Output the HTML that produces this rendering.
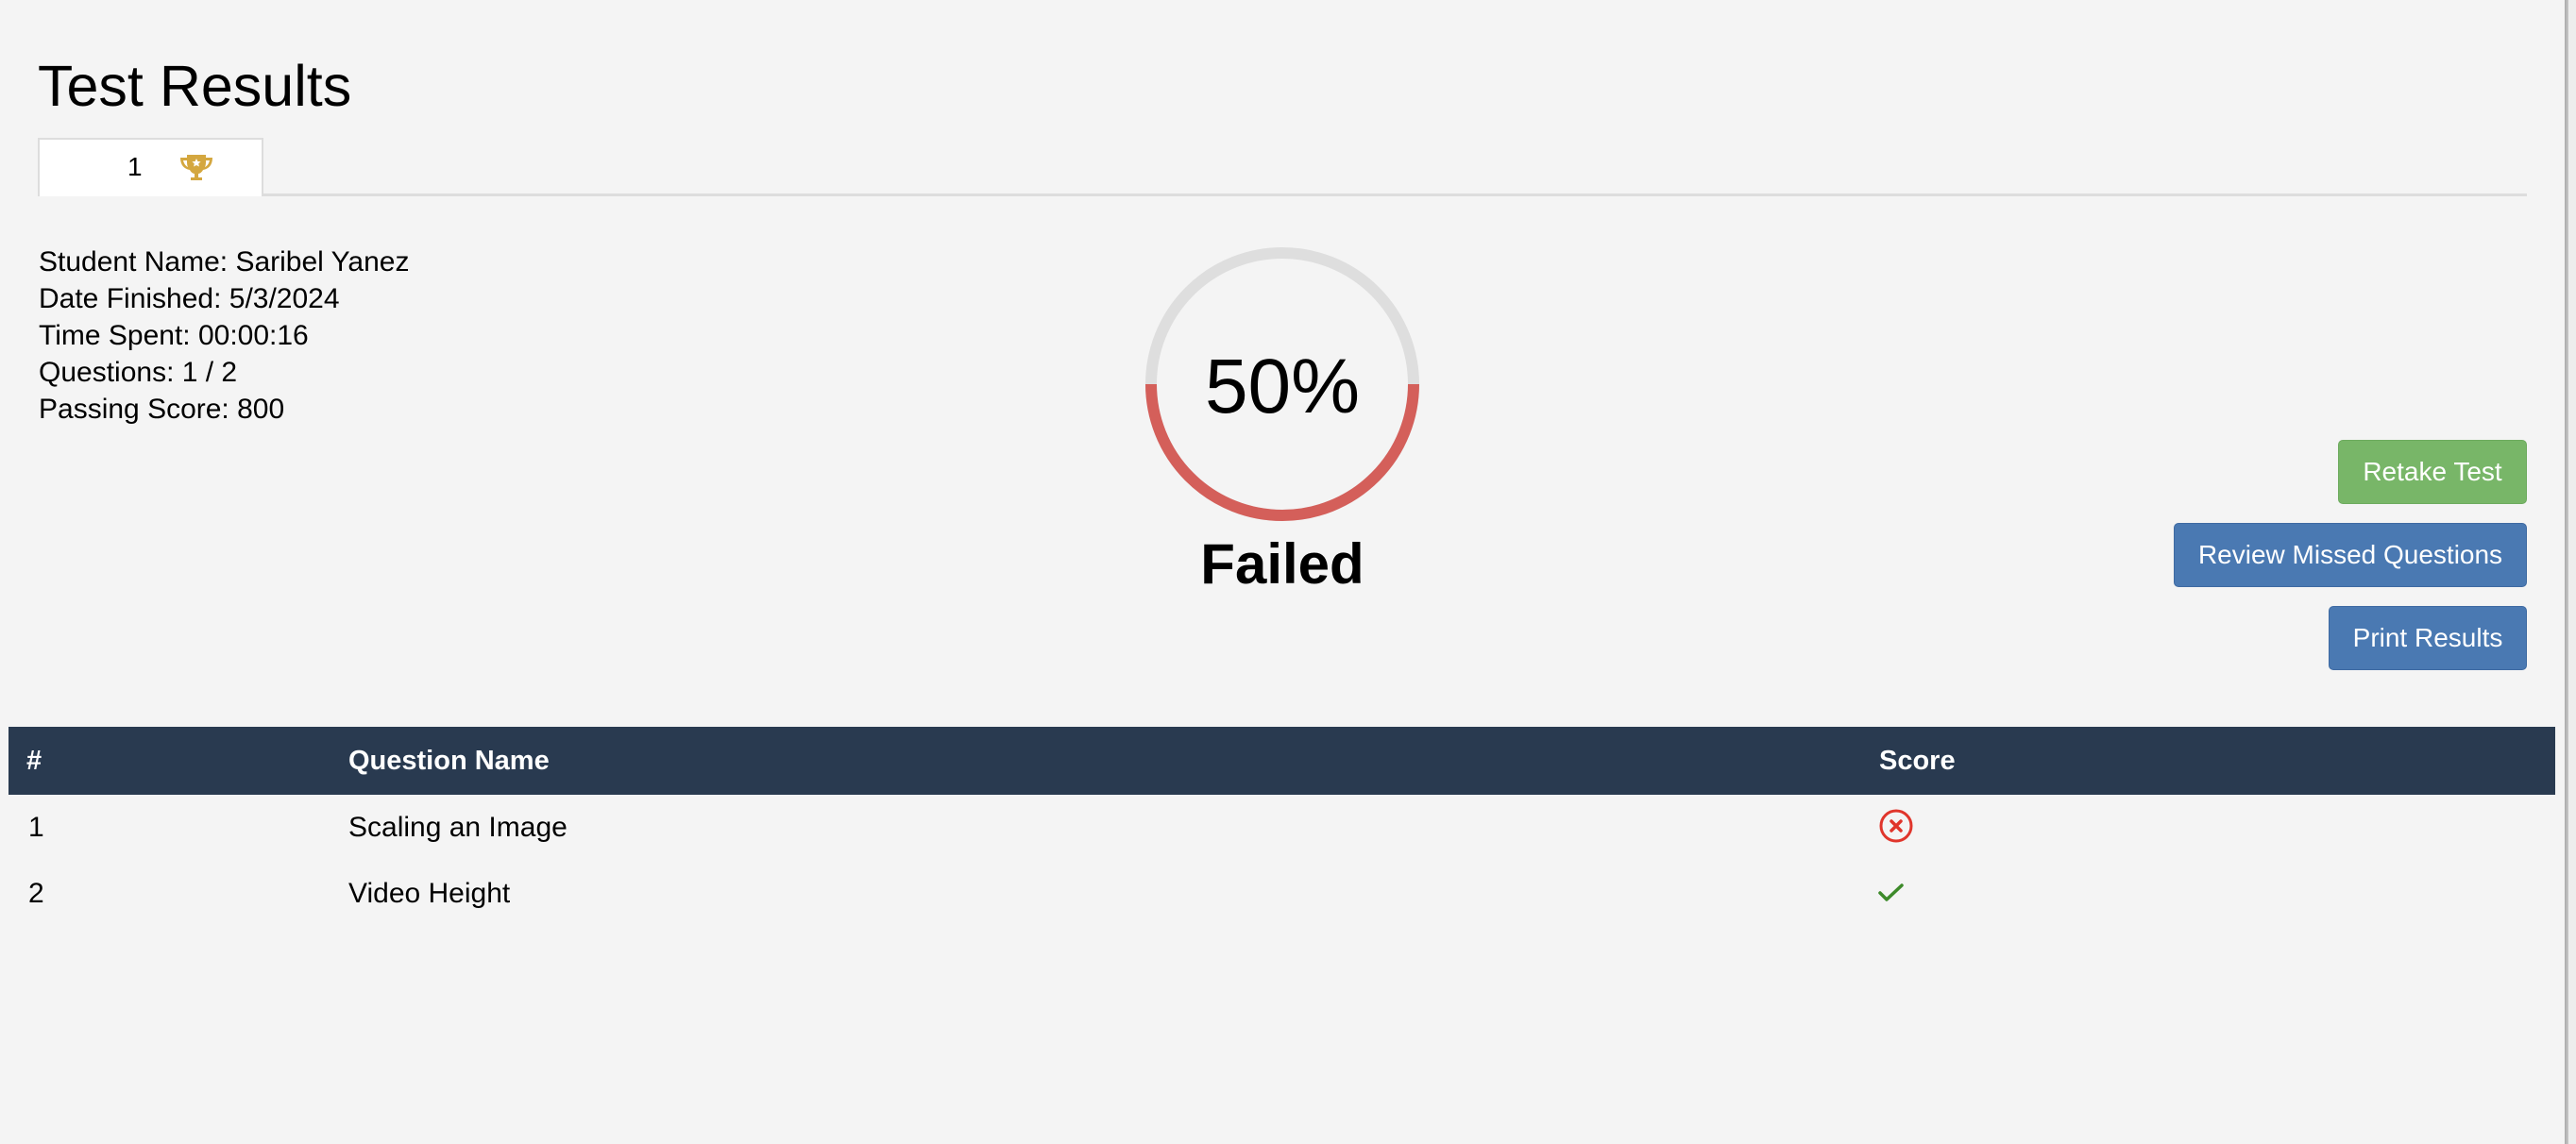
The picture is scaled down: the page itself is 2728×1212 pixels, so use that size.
<!DOCTYPE html>
<html><head><meta charset="utf-8"><style>
*{margin:0;padding:0;box-sizing:border-box}
html,body{width:2728px;height:1212px;overflow:hidden;background:#f4f4f4;font-family:"Liberation Sans",Arial,sans-serif;color:#000}
.abs{position:absolute;white-space:nowrap}
.btn{position:absolute;color:#fff;font-size:28px;border-radius:5px;text-align:center;line-height:66px;height:68px}
.blue{background:#4a79b2;border:1px solid #3e6aa2}
.green{background:#78b668;border:1px solid #6dab5e}
.info{font-size:30px;line-height:39px}
</style></head><body>
<div class="abs" style="left:40px;top:56px;font-size:61px;line-height:70px">Test Results</div>
<div class="abs" style="left:278px;top:205px;width:2398px;height:3px;background:#ddd"></div>
<div class="abs" style="left:40px;top:146px;width:239px;height:62px;background:#fff;border:2px solid #ddd;border-bottom:none"></div>
<div class="abs" style="left:135px;top:160px;font-size:28px;line-height:34px">1</div>
<svg class="abs" style="left:190px;top:162px" width="36" height="32" viewBox="0 0 36 32">
<path d="M8 2h20v3h7c0 8-4 12-10 13-1 2-3 4-5 4v4h4v3H12v-3h4v-4c-2 0-4-2-5-4C5 17 1 13 1 5h7zM4 8c1 4 3 6 5 7-1-2-1-4-1-7zM32 8h-4c0 3 0 5-1 7 2-1 4-3 5-7z" fill="#d4a73f"/>
<path d="M18 6l1.4 3 3.2.3-2.4 2.1.7 3.1L18 13l-2.9 1.5.7-3.1-2.4-2.1 3.2-.3z" fill="#fff"/></svg>
<div class="abs info" style="left:41px;top:258px">Student Name: Saribel Yanez<br>Date Finished: 5/3/2024<br>Time Spent: 00:00:16<br>Questions: 1 / 2<br>Passing Score: 800</div>
<svg class="abs" style="left:1210px;top:260px" width="300" height="300" viewBox="0 0 300 300">
<circle cx="148" cy="147" r="139" fill="none" stroke="#dedede" stroke-width="12"/>
<path d="M9 147A139 139 0 0 0 287 147" fill="none" stroke="#d45f5a" stroke-width="12"/>
</svg>
<div class="abs" style="left:1158px;top:360px;width:400px;text-align:center;font-size:82px;line-height:100px">50%</div>
<div class="abs" style="left:1158px;top:562px;width:400px;text-align:center;font-size:60px;font-weight:bold;line-height:72px">Failed</div>
<div class="btn green" style="left:2476px;top:466px;width:200px">Retake Test</div>
<div class="btn blue" style="left:2302px;top:554px;width:374px">Review Missed Questions</div>
<div class="btn blue" style="left:2466px;top:642px;width:210px">Print Results</div>
<div class="abs" style="left:9px;top:770px;width:2697px;height:72px;background:#293a50"></div>
<div class="abs" style="left:28px;top:789px;color:#fff;font-weight:bold;font-size:29px;line-height:34px">#</div>
<div class="abs" style="left:369px;top:789px;color:#fff;font-weight:bold;font-size:29px;line-height:34px">Question Name</div>
<div class="abs" style="left:1990px;top:789px;color:#fff;font-weight:bold;font-size:29px;line-height:34px">Score</div>
<div class="abs" style="left:30px;top:860px;font-size:30px;line-height:34px">1</div>
<div class="abs" style="left:369px;top:860px;font-size:30px;line-height:34px">Scaling an Image</div>
<div class="abs" style="left:30px;top:930px;font-size:30px;line-height:34px">2</div>
<div class="abs" style="left:369px;top:930px;font-size:30px;line-height:34px">Video Height</div>
<svg class="abs" style="left:1989px;top:856px" width="38" height="38" viewBox="0 0 38 38">
<circle cx="19" cy="19" r="16" fill="none" stroke="#e0352b" stroke-width="3"/>
<path d="M14 14l10 10M24 14l-10 10" stroke="#e0352b" stroke-width="3.5" stroke-linecap="round"/></svg>
<svg class="abs" style="left:1988px;top:934px" width="30" height="24" viewBox="0 0 30 24">
<path d="M3 12l7 7L26 4" fill="none" stroke="#3d8a2a" stroke-width="3.5" stroke-linecap="round" stroke-linejoin="round"/></svg>
<div class="abs" style="left:2716px;top:0;width:4px;height:1212px;background:linear-gradient(90deg,#aaa,#c8c8c8)"></div>
<div class="abs" style="left:2720px;top:0;width:8px;height:1212px;background:#ededed"></div>
</body></html>
